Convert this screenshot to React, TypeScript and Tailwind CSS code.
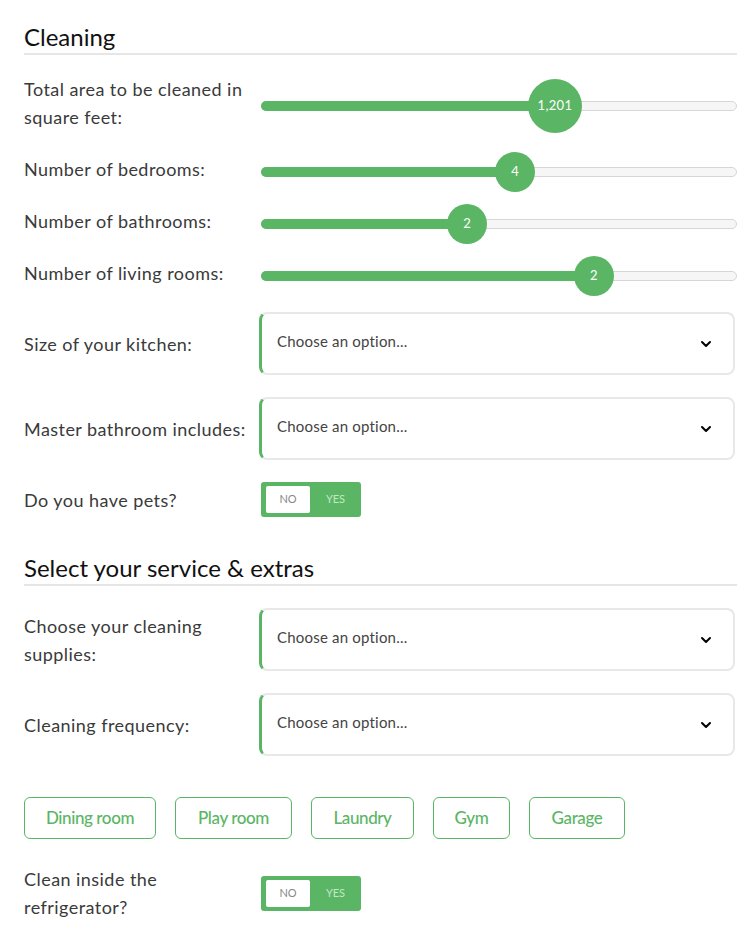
import React from "react";
import { ChevronDown } from "lucide-react";

function Slider({ pct, value, big }: { pct: number; value: string; big?: boolean }) {
  return (
    <div className="relative mt-[6px] ml-[2px] h-[10px] w-full rounded-full border border-[#d6d6d6] bg-[#f6f6f6]">
      <div
        className="absolute left-[-1px] top-[-1px] h-[10px] rounded-l-full bg-[#5ab665]"
        style={{ width: `${pct}%` }}
      />
      <div
        className={
          "absolute flex items-center justify-center rounded-full bg-[#5ab665] text-white tracking-[0.3px] " +
          (big ? "h-[54px] w-[54px] text-[13px] top-[-23px]" : "h-[40px] w-[40px] text-[13px] top-[-16px]")
        }
        style={{ left: `calc(${pct}% - ${big ? 27 : 20}px)` }}
      >
        {value}
      </div>
    </div>
  );
}

function Select() {
  return (
    <div className="flex h-[63px] w-[476px] items-center justify-between rounded-[8px] border-2 border-l-[3px] border-[#e8e8e8] border-l-[#5ab665] bg-white pl-[15px] pr-[19px]">
      <span className="mb-[5px] text-[15px] tracking-[0.2px] text-[#444]">Choose an option...</span>
      <ChevronDown size={16} strokeWidth={3} className="text-black" />
    </div>
  );
}

function Toggle() {
  return (
    <div className="ml-[2px] flex h-[35px] w-[100px] items-center rounded-[3px] bg-[#5ab665] pl-[5px]">
      <div className="flex h-[27px] w-[44px] items-center justify-center rounded-[2px] bg-white text-[11px] text-[#888]">
        NO
      </div>
      <div className="flex flex-1 items-center justify-center text-[11px] text-[#c3e6c7]">YES</div>
    </div>
  );
}

function Heading({ children }: { children: React.ReactNode }) {
  return (
    <h2 className="border-b-2 border-[#e6e6e6] pb-[1px] text-[24px] leading-[30px] text-[#111]" style={{ fontFamily: "Lato, sans-serif" }}>
      {children}
    </h2>
  );
}

function Row({ label, children, className = "" }: { label: React.ReactNode; children: React.ReactNode; className?: string }) {
  return (
    <div className={"grid grid-cols-[235px_1fr] items-center " + className}>
      <div className="text-[18px] leading-[28px] tracking-[0.45px] text-[#3a3a3a]">{label}</div>
      <div className="flex items-center">{children}</div>
    </div>
  );
}

const buttons: [string, number][] = [
  ["Dining room", 132],
  ["Play room", 117],
  ["Laundry", 103],
  ["Gym", 77],
  ["Garage", 96],
];

export default function App() {
  return (
    <div className="bg-white pl-6 pr-[13px] pt-[22px] pb-[14px]" style={{ fontFamily: "Lato, 'Open Sans', sans-serif" }}>
      <Heading>Cleaning</Heading>
      <div className="mt-[20px] flex flex-col gap-[24px]">
        <Row label={<>Total area to be cleaned in<br />square feet:</>}>
          <Slider pct={61.8} value="1,201" big />
        </Row>
        <Row label="Number of bedrooms:">
          <Slider pct={53.4} value="4" />
        </Row>
        <Row label="Number of bathrooms:">
          <Slider pct={43.3} value="2" />
        </Row>
        <Row label="Number of living rooms:">
          <Slider pct={70} value="2" />
        </Row>
      </div>
      <div className="mt-[25px] flex flex-col gap-[22px]">
        <Row label="Size of your kitchen:">
          <Select />
        </Row>
        <Row label="Master bathroom includes:">
          <Select />
        </Row>
        <Row label="Do you have pets?">
          <Toggle />
        </Row>
      </div>
      <div className="mt-[36px]">
        <Heading>Select your service &amp; extras</Heading>
      </div>
      <div className="mt-[22px] flex flex-col gap-[22px]">
        <Row label={<>Choose your cleaning<br />supplies:</>}>
          <Select />
        </Row>
        <Row label="Cleaning frequency:">
          <Select />
        </Row>
      </div>
      <div className="mt-[41px] flex gap-[19px]">
        {buttons.map(([t, w]) => (
          <button
            key={t}
            className="flex h-[42px] items-center justify-center rounded-[6px] border border-[#5ab665] bg-white text-[17px] font-medium tracking-[-0.4px] text-[#5ab665]"
            style={{ width: w }}
          >
            {t}
          </button>
        ))}
      </div>
      <div className="mt-[26px]">
        <Row label={<>Clean inside the<br />refrigerator?</>}>
          <Toggle />
        </Row>
      </div>
    </div>
  );
}
